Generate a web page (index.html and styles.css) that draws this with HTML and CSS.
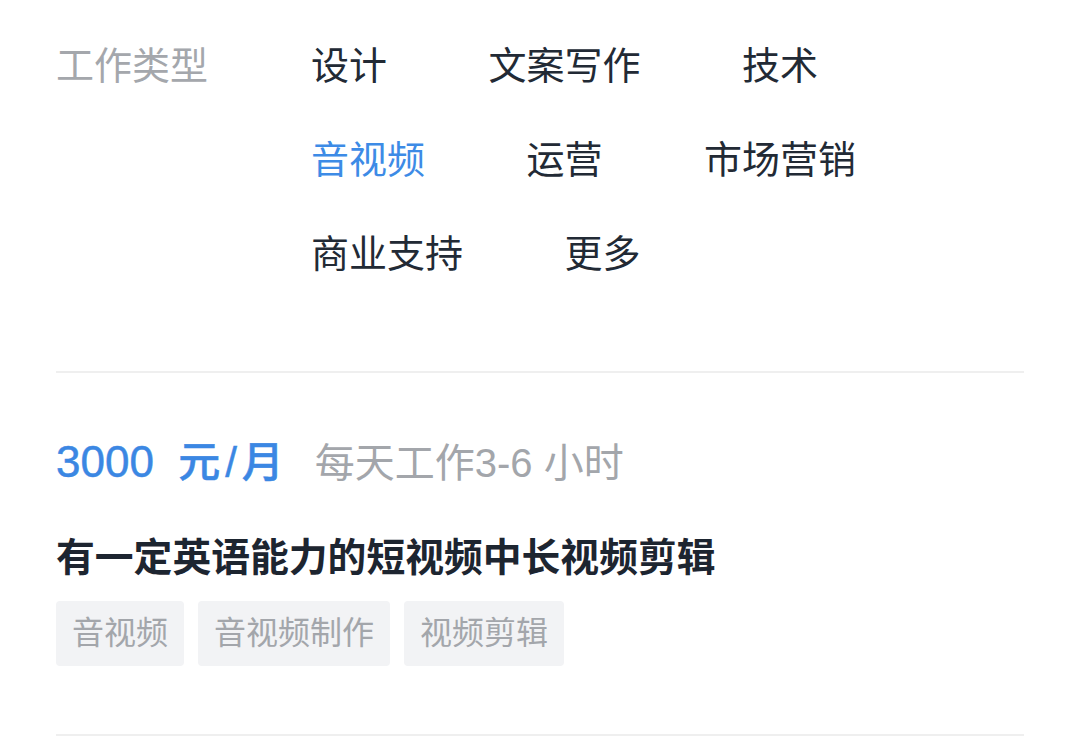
FILE: index.html
```html
<!DOCTYPE html>
<html lang="zh-CN">
<head>
<meta charset="utf-8">
<title>工作类型</title>
<link rel="stylesheet" href="styles.css">
</head>
<body>
<div class="page">
  <section class="filter">
    <div class="filter-label">工作类型</div>
    <div class="options">
      <span class="option">设计</span>
      <span class="option">文案写作</span>
      <span class="option">技术</span>
      <span class="option active">音视频</span>
      <span class="option">运营</span>
      <span class="option">市场营销</span>
      <span class="option">商业支持</span>
      <span class="option">更多</span>
    </div>
  </section>
  <div class="divider"></div>
  <section class="job">
    <div class="job-meta">
      <span class="price"><span class="num">3000</span> <span class="unit">元/月</span></span>
      <span class="hours">每天工作3-6 小时</span>
    </div>
    <h2 class="job-title">有一定英语能力的短视频中长视频剪辑</h2>
    <div class="tags">
      <span class="tag">音视频</span>
      <span class="tag">音视频制作</span>
      <span class="tag">视频剪辑</span>
    </div>
  </section>
  <div class="divider"></div>
</div>
</body>
</html>
```
FILE: styles.css
```css
html, body {
  margin: 0;
  padding: 0;
  background: #ffffff;
}
body {
  font-family: "Liberation Sans", "Noto Sans CJK SC", sans-serif;
  color: #222a35;
}
.page {
  padding: 0 56px;
}
.filter {
  display: flex;
  padding-top: 39px;
  padding-bottom: 90px;
}
.filter-label {
  width: 255px;
  flex: none;
  font-size: 38px;
  line-height: 54px;
  color: #a4a7ac;
}
.options {
  flex: 1;
  display: flex;
  flex-wrap: wrap;
  column-gap: 101.5px;
  row-gap: 40px;
}
.option {
  font-size: 38px;
  line-height: 54px;
  color: #222a35;
}
.option.active {
  color: #3d8be6;
}
.divider {
  height: 2px;
  background: #efefef;
}
.job {
  padding-top: 59px;
  padding-bottom: 68px;
}
.job-meta {
  display: flex;
  align-items: baseline;
  height: 60px;
  line-height: 60px;
}
.price {
  color: #3b87e3;
  font-weight: 500;
  font-size: 44px;
  -webkit-text-stroke: 0.5px #3b87e3;
}
.num {
  font-size: 44px;
}
.unit {
  margin-left: 12px;
  font-size: 42px;
  letter-spacing: 5px;
}
.hours {
  margin-left: 26px;
  font-size: 40px;
  color: #a3a6ab;
}
.job-title {
  margin: 39px 0 16px;
  font-size: 38.8px;
  line-height: 54px;
  font-weight: 700;
  color: #1d2530;
}
.tags {
  display: flex;
  gap: 14px;
}
.tag {
  height: 65px;
  line-height: 65px;
  padding: 0 16px;
  border-radius: 4px;
  background: #f2f3f5;
  color: #a3a6ab;
  font-size: 32px;
}
```
